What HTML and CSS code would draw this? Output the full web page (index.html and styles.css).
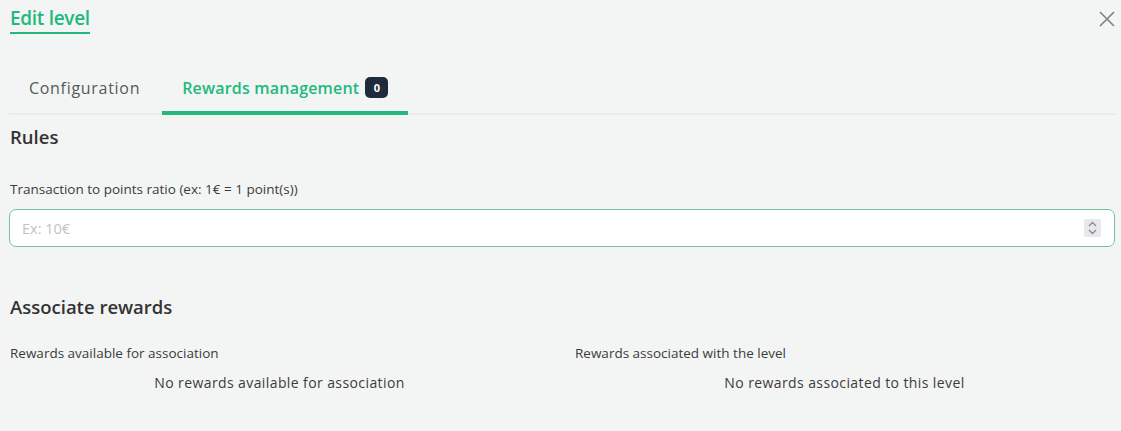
FILE: index.html
```html
<!DOCTYPE html>
<html lang="en">
<head>
<meta charset="utf-8">
<title>Edit level</title>
<link rel="stylesheet" href="styles.css">
</head>
<body>
<div class="modal">
  <header class="header">
    <h1 class="title">Edit level</h1>
    <button class="close" aria-label="Close">
      <svg width="16" height="16" viewBox="0 0 16 16"><path d="M1 1L15 15M15 1L1 15" stroke="#808080" stroke-width="1.6" fill="none"/></svg>
    </button>
  </header>
  <nav class="tabs">
    <div class="tab">Configuration</div>
    <div class="tab active">Rewards management <span class="badge">0</span></div>
  </nav>
  <section class="rules">
    <h2 class="section-title">Rules</h2>
    <label class="label">Transaction to points ratio (ex: 1€ = 1 point(s))</label>
    <div class="input">
      <span class="placeholder">Ex: 10€</span>
      <span class="spinner">
        <svg width="9" height="14" viewBox="0 0 9 14"><path d="M1 5L4.5 1.5L8 5M1 9L4.5 12.5L8 9" stroke="#8a8a95" stroke-width="1.3" fill="none"/></svg>
      </span>
    </div>
  </section>
  <section class="assoc">
    <h2 class="section-title">Associate rewards</h2>
    <div class="cols">
      <div class="col">
        <div class="label">Rewards available for association</div>
        <div class="empty">No rewards available for association</div>
      </div>
      <div class="col">
        <div class="label">Rewards associated with the level</div>
        <div class="empty">No rewards associated to this level</div>
      </div>
    </div>
  </section>
</div>
</body>
</html>
```
FILE: styles.css
```css
* { box-sizing: border-box; }
html, body { margin: 0; padding: 0; }
body {
  background: #f3f5f4;
  font-family: "Open Sans", "Noto Sans", sans-serif;
  color: #333;
}
.modal {
  padding: 0 6px 0 9px;
}
.header {
  display: flex;
  justify-content: space-between;
  align-items: flex-start;
  height: 62px;
}
.title {
  margin: 5px 0 0 1px;
  font-size: 19px;
  font-weight: 600;
  color: #22b97d;
  line-height: 26px;
  padding-bottom: 1px;
  border-bottom: 2px solid #22b97d;
  letter-spacing: -0.3px;
}
.close {
  margin-top: 11px;
  margin-right: 0;
  border: 0;
  background: none;
  padding: 0;
  width: 16px;
  height: 16px;
  cursor: pointer;
}
.tabs {
  display: flex;
  gap: 2px;
  border-bottom: 2px solid #e9ecea;
  height: 53px;
}
.tab {
  display: flex;
  align-items: center;
  padding: 0 20px;
  font-size: 16px;
  font-weight: 500;
  letter-spacing: 0.7px;
  color: #555a58;
  margin-bottom: -2px;
  border-bottom: 4px solid transparent;
  padding-top: 2px;
}
.tab.active {
  color: #22b97d;
  font-weight: 600;
  letter-spacing: 0.2px;
  border-bottom-color: #22b97d;
}
.badge {
  display: inline-flex;
  align-items: center;
  justify-content: center;
  width: 23px;
  height: 21px;
  margin-left: 6px;
  background: #1f2a3d;
  color: #fff;
  border-radius: 5px;
  font-size: 11px;
  font-weight: 700;
  letter-spacing: 0;
}
.section-title {
  margin: 0;
  font-size: 18.5px;
  font-weight: 600;
  color: #333;
  line-height: 24px;
  padding-left: 1px;
}
.rules {
  padding-top: 10px;
}
.label {
  display: block;
  font-size: 13.5px;
  color: #3b3b3b;
  line-height: 18px;
  padding-left: 1px;
}
.rules .label {
  margin-top: 31px;
}
.input {
  margin-top: 11px;
  height: 38px;
  background: #fff;
  border: 1px solid #76c3a2;
  border-radius: 7px;
  display: flex;
  align-items: center;
  justify-content: space-between;
  padding: 0 13px 0 12px;
}
.placeholder {
  font-size: 14.5px;
  color: #c2c2c2;
}
.spinner {
  width: 17px;
  height: 18px;
  background: #e7e7ec;
  border-radius: 2px;
  display: flex;
  align-items: center;
  justify-content: center;
}
.assoc {
  padding-top: 48px;
}
.cols {
  display: grid;
  grid-template-columns: 1fr 1fr;
  gap: 24px;
  margin-top: 25px;
}
.empty {
  text-align: center;
  font-size: 14px;
  color: #3b3b3b;
  letter-spacing: 0.4px;
  margin-top: 12px;
  line-height: 18px;
}
```
